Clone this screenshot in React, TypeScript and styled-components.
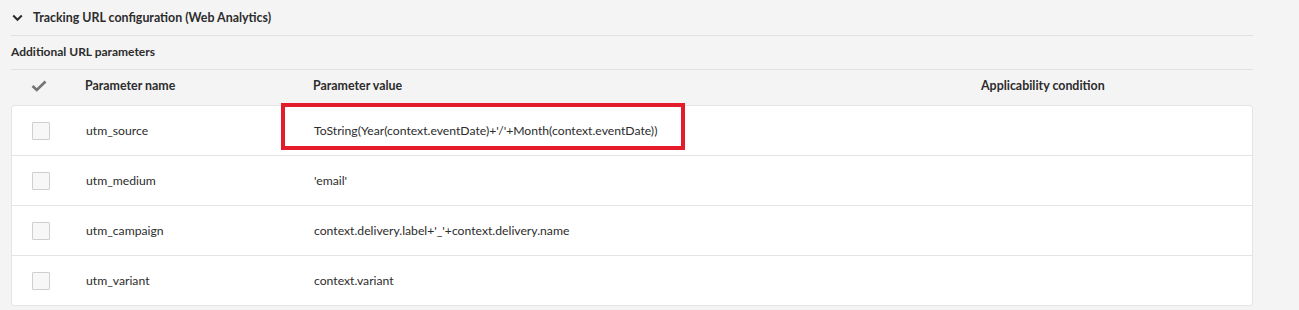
import styled, { createGlobalStyle } from "styled-components";

const GlobalStyle = createGlobalStyle`
  html, body {
    margin: 0;
    padding: 0;
    background: #f4f4f4;
  }
  body {
    font-family: Lato, "Open Sans", sans-serif;
    color: #2c2c2c;
  }
`;

interface Param {
  name: string;
  value: string;
  highlight?: boolean;
}

const params: Param[] = [
  {
    name: "utm_source",
    value: "ToString(Year(context.eventDate)+'/'+Month(context.eventDate))",
    highlight: true,
  },
  { name: "utm_medium", value: "'email'" },
  { name: "utm_campaign", value: "context.delivery.label+'_'+context.delivery.name" },
  { name: "utm_variant", value: "context.variant" },
];

const Chevron = () => (
  <svg width="11" height="8" viewBox="0 0 11 8">
    <path d="M1.2 1.5 L5.5 5.8 L9.8 1.5" fill="none" stroke="#2c2c2c" strokeWidth="2" />
  </svg>
);

const Check = () => (
  <svg width="16" height="12" viewBox="0 0 16 12">
    <path d="M1.5 6 L5.8 10 L14.5 1.5" fill="none" stroke="#747474" strokeWidth="2.6" />
  </svg>
);

const App = () => {
  return (
    <Page>
      <GlobalStyle />
      <SectionHeader>
        <Chevron />
        <SectionTitle>Tracking URL configuration (Web Analytics)</SectionTitle>
      </SectionHeader>
      <SubTitle>Additional URL parameters</SubTitle>
      <HeadRow>
        <CheckCell>
          <Check />
        </CheckCell>
        <HeadCell>Parameter name</HeadCell>
        <HeadCell>Parameter value</HeadCell>
        <HeadCell>Applicability condition</HeadCell>
      </HeadRow>
      <TableBody>
        {params.map((p) => (
          <Row key={p.name}>
            <CheckCell>
              <Box />
            </CheckCell>
            <Cell>{p.name}</Cell>
            <Cell>
              {p.highlight && <Highlight />}
              {p.value}
            </Cell>
            <Cell />
          </Row>
        ))}
      </TableBody>
    </Page>
  );
};

const Page = styled.div`
  width: 1242px;
  padding: 0 0 6px 11px;
`;

const SectionHeader = styled.div`
  display: flex;
  align-items: center;
  gap: 10px;
  height: 35px;
  padding-left: 1px;
  border-bottom: 1px solid #e1e1e1;
`;

const SectionTitle = styled.div`
  font-size: 12.4px;
  font-weight: 700;
`;

const SubTitle = styled.div`
  display: flex;
  align-items: center;
  height: 34px;
  padding-bottom: 2px;
  box-sizing: border-box;
  font-size: 12px;
  font-weight: 700;
  border-bottom: 1px solid #e1e1e1;
`;

const grid = `
  display: grid;
  grid-template-columns: 74px 228px 668px 1fr;
  align-items: stretch;
`;

const HeadRow = styled.div`
  ${grid}
  height: 35px;
  padding-bottom: 4px;
  box-sizing: border-box;
`;

const HeadCell = styled.div`
  display: flex;
  align-items: center;
  font-size: 12.4px;
  font-weight: 700;
`;

const CheckCell = styled.div`
  display: flex;
  align-items: center;
  padding-left: 20px;
`;

const TableBody = styled.div`
  background: #ffffff;
  border: 1px solid #e4e4e4;
  border-radius: 3px;
`;

const Row = styled.div`
  ${grid}
  height: 49px;
  & + & {
    border-top: 1px solid #e4e4e4;
  }
`;

const Cell = styled.div`
  position: relative;
  display: flex;
  align-items: center;
  font-size: 12.2px;
  color: #2c2c2c;
`;

const Box = styled.div`
  width: 16px;
  height: 16px;
  border: 1px solid #cfcfcf;
  background: #f7f7f7;
  border-radius: 1px;
`;

const Highlight = styled.div`
  position: absolute;
  left: -33px;
  top: -3px;
  width: 404px;
  height: 47px;
  box-sizing: border-box;
  border: 4px solid #e31b2a;
  pointer-events: none;
`;

export default App;
